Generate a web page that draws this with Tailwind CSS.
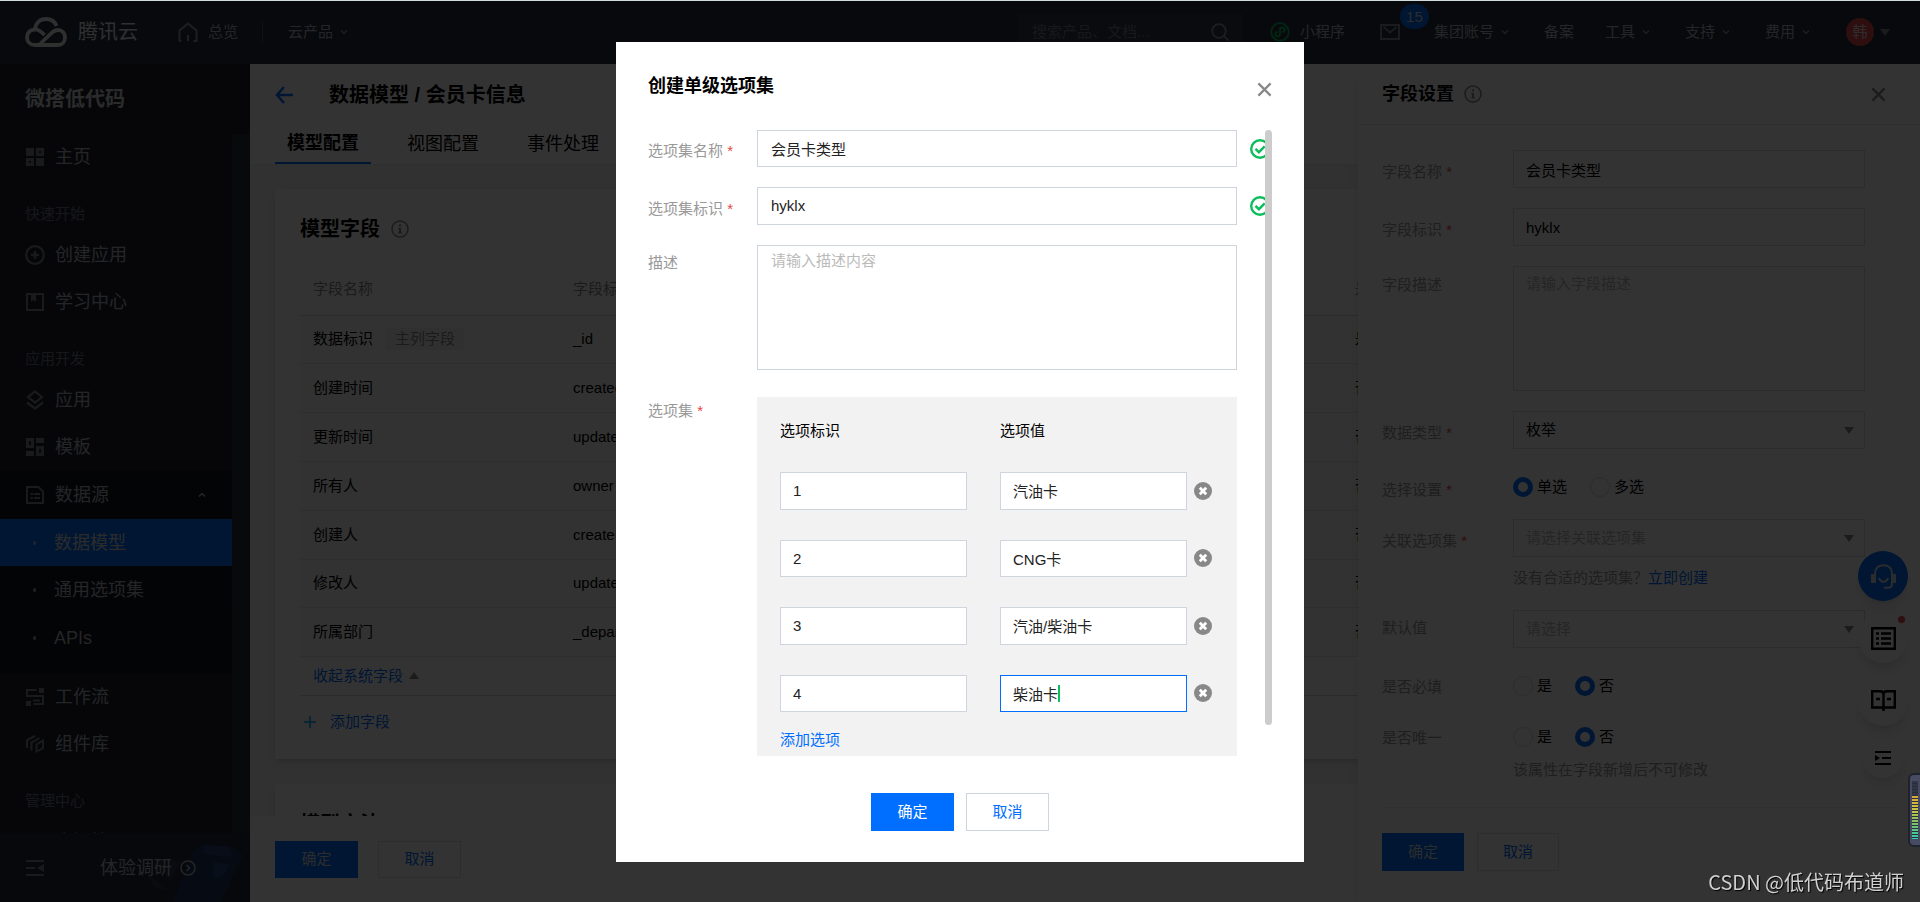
<!DOCTYPE html>
<html lang="zh-CN">
<head>
<meta charset="utf-8">
<meta name="viewport" content="width=device-width, initial-scale=1">
<title>微搭低代码 - 数据模型</title>
<script src="https://cdn.jsdelivr.net/npm/@tailwindcss/browser@4"></script>
</head>
<body class="h-screen overflow-hidden border-t border-[#d3dddd] bg-white font-['Liberation_Sans','Noto_Sans_CJK_SC',sans-serif] text-[15px] leading-[22px] text-black">

<svg class="hidden" aria-hidden="true">
  <symbol id="down" viewBox="0 0 8 8"><path d="M1 2.5l3 3 3-3" fill="none" stroke="currentColor" stroke-width="1.5"/></symbol>
  <symbol id="info" viewBox="0 0 18 18"><circle cx="9" cy="9" r="8" fill="none" stroke="currentColor" stroke-width="1.5"/><path d="M8 4.5h2v2H8zM7 8h3v4.5h1.2v1H6.8v-1H8V9H7z" fill="currentColor"/></symbol>
  <symbol id="close" viewBox="0 0 16 16"><path d="M1.5 1.5l13 13m0-13l-13 13" fill="none" stroke="currentColor" stroke-width="2.4"/></symbol>
  <symbol id="tri" viewBox="0 0 10 7"><path d="M0 0h10L5 7z" fill="currentColor"/></symbol>
  <symbol id="check" viewBox="0 0 20 20"><circle cx="10" cy="10" r="8.8" fill="none" stroke="#0abf5b" stroke-width="2.4"/><path d="M5.5 9.8l3.4 3.4 5.8-5.8" fill="none" stroke="#0abf5b" stroke-width="2.4"/></symbol>
  <symbol id="remove" viewBox="0 0 18 18"><circle cx="9" cy="9" r="9" fill="#888"/><path d="M5.8 5.800l6.400 6.400m0-6.400l-6.400 6.400" stroke="#fff" stroke-width="2.8"/></symbol>
</svg>

<div class="flex h-full flex-col">
  <!-- Top bar -->
  <header class="flex h-[63px] shrink-0 items-center bg-[#262f3e] pb-px pl-[25px] pr-[30px] text-[#b4bac5]">
    <a href="#" class="flex items-center gap-[11px] text-[#e8e8e8]">
      <svg class="h-[30px] w-[42px]" viewBox="0 0 42 30" fill="none" stroke="currentColor" stroke-width="3.8"><path d="M19.5 18C15 13.500 12.500 12.200 9.500 12.500 5 13 2 16 2 20c0 5 3.500 8 8 8h23c4 0 7-3 7-7.500S37 13 33 13c-3.500 0-5 1.500-7 3.500L14 28"/><path d="M10 12.500C10.500 6 15 2 21 2c5 0 9 3 10.500 7"/></svg>
      <span class="text-[20px]">腾讯云</span>
    </a>
    <a href="#" class="ml-10 flex items-center gap-[10px]">
      <svg class="h-5 w-5 text-[#9096a1]" viewBox="0 0 20 20" fill="none" stroke="currentColor" stroke-width="2"><path d="M1.500 19V8.500L10 1.500l8.500 7V19h-3M1.500 19h2M10 19v-6"/></svg>
      <span>总览</span>
    </a>
    <span class="ml-6 h-5 w-px bg-[#4b5463]"></span>
    <a href="#" class="ml-[25px] flex items-center gap-[7px]">云产品<svg class="h-2 w-2 text-[#8c93a0]"><use href="#down"/></svg></a>

    <div class="ml-auto flex h-9 w-[225px] items-center bg-[#2f3b4c] px-[14px]">
      <input type="text" aria-label="搜索" placeholder="搜索产品、文档..." class="w-full min-w-0 bg-transparent placeholder-[#6f7989] outline-none">
      <svg class="h-[18px] w-[18px] shrink-0 text-[#8c93a0]" viewBox="0 0 18 18" fill="none" stroke="currentColor" stroke-width="1.8"><circle cx="8" cy="8" r="6.800"/><path d="M13 13l4.500 4.500"/></svg>
    </div>
    <a href="#" class="ml-[27px] flex items-center gap-[10px]">
      <svg class="h-5 w-5 text-[#07c160]" viewBox="0 0 20 20" fill="none" stroke="currentColor" stroke-width="1.800"><circle cx="10" cy="10" r="8.800"/><path d="M7.800 9.800a2.300 2.300 0 1 0 2.200 2.400V7.700a2.300 2.300 0 1 1 2.400 2.400"/></svg>
      小程序
    </a>
    <a href="#" aria-label="消息" class="relative ml-[35px]">
      <svg class="h-4 w-5 text-[#7f8693]" viewBox="0 0 20 16" fill="none" stroke="currentColor" stroke-width="2"><path d="M1 1h18v14H1zM3.500 3L10 8.500 16.500 3"/></svg>
      <span class="absolute bottom-[11px] left-5 flex h-[25px] w-[29px] items-center justify-center rounded-full bg-[#006eff] text-[#d8dbe0]">15</span>
    </a>
    <a href="#" class="ml-[34px] flex items-center gap-[7px]">集团账号<svg class="h-2 w-2 text-[#8c93a0]"><use href="#down"/></svg></a>
    <a href="#" class="ml-[35px]">备案</a>
    <a href="#" class="ml-[31px] flex items-center gap-[7px]">工具<svg class="h-2 w-2 text-[#8c93a0]"><use href="#down"/></svg></a>
    <a href="#" class="ml-[35px] flex items-center gap-[7px]">支持<svg class="h-2 w-2 text-[#8c93a0]"><use href="#down"/></svg></a>
    <a href="#" class="ml-[35px] flex items-center gap-[7px]">费用<svg class="h-2 w-2 text-[#8c93a0]"><use href="#down"/></svg></a>
    <button type="button" class="ml-9 flex items-center gap-[6px]">
      <span class="flex h-7 w-7 items-center justify-center rounded-full bg-[#e54545] text-[15px] text-[#e0e0e0]">韩</span>
      <svg class="h-[7px] w-[10px] text-[#7f8693]"><use href="#tri"/></svg>
    </button>
  </header>

  <div class="relative flex min-h-0 flex-1">
    <!-- Side menu -->
    <aside class="flex w-[250px] shrink-0 flex-col bg-[#1e222d] text-[18px] text-[#b4b8c0]">
      <h2 class="flex h-[70px] shrink-0 items-center pl-[25px] text-[20px] font-bold text-[#d2d4d8]">微搭低代码</h2>
      <div class="flex min-h-0 flex-1">
        <nav class="min-w-0 flex-1 overflow-hidden">
          <a href="#" class="flex h-[46px] items-center gap-[11px] pl-[26px]">
            <svg class="h-[18px] w-[18px] text-[#7b808b]" viewBox="0 0 18 18" fill="currentColor" fill-rule="evenodd"><path d="M0 0h8v8H0zM10 0h8v8h-8zM13 3v2h2V3zM0 10h8v8H0zM3 13v2h2v-2zM10 10h8v8h-8z"/></svg>主页</a>
          <h3 class="h-[51px] pl-[25px] pt-[23px] text-[15px] text-[#6f7581]">快速开始</h3>
          <a href="#" class="flex h-[47px] items-center gap-[11px] pl-[25px]">
            <svg class="-mr-px h-5 w-5 text-[#7b808b]" viewBox="0 0 20 20" fill="none" stroke="currentColor"><circle cx="10" cy="10" r="8.800" stroke-width="2.200"/><path d="M10 6v8M6 10h8" stroke-width="2.400"/></svg>创建应用</a>
          <a href="#" class="flex h-[47px] items-center gap-[11px] pl-[26px]">
            <svg class="h-[18px] w-[18px] text-[#7b808b]" viewBox="0 0 18 18"><path d="M1 1h16v16H1z" fill="none" stroke="currentColor" stroke-width="2"/><path d="M5 2h5v7L7.500 6.800 5 9z" fill="currentColor"/></svg>学习中心</a>
          <h3 class="h-[51px] pl-[25px] pt-[23px] text-[15px] text-[#6f7581]">应用开发</h3>
          <a href="#" class="flex h-[47px] items-center gap-[11px] pl-[26px]">
            <svg class="h-5 w-[18px] text-[#7b808b]" viewBox="0 0 18 20" fill="none" stroke="currentColor" stroke-width="2.200"><path d="M9 1.500l7 5.500-7 5.500L2 7zM1 12.500l8 6 8-6"/></svg>应用</a>
          <a href="#" class="flex h-12 items-center gap-[11px] pl-[26px]">
            <svg class="h-[18px] w-[18px] text-[#7b808b]" viewBox="0 0 18 18" fill="currentColor" fill-rule="evenodd"><path d="M0 0h8v10H0zM3 3v4h2V3zM10 0h8v5h-8zM0 13h8v5H0zM10 8h8v10h-8zM13 11v4h2v-4z"/></svg>模板</a>
          <div class="bg-[#13161d] pb-3">
            <a href="#" class="flex h-12 items-center gap-[11px] pl-[26px] pr-[26px]">
              <svg class="h-[18px] w-[18px] text-[#7b808b]" viewBox="0 0 18 18" fill="none" stroke="currentColor" stroke-width="2"><path d="M1 1h11.500L17 5.500V17H1z"/><path d="M4.500 8H7m1 0h6M4.500 12H7m1 0h6"/></svg>数据源
              <svg class="ml-auto h-2 w-2 rotate-180"><use href="#down"/></svg></a>
            <a href="#" class="flex h-[47px] items-center gap-[18px] bg-[#006eff] pl-[33px] text-[#d5d8dc]"><span class="h-1 w-[3px] rounded-full bg-white/50"></span>数据模型</a>
            <a href="#" class="flex h-12 items-center gap-[18px] pl-[33px]"><span class="h-1 w-[3px] rounded-full bg-[#9a9da6]"></span>通用选项集</a>
            <a href="#" class="flex h-[47px] items-center gap-[18px] pl-[33px]"><span class="h-1 w-[3px] rounded-full bg-[#9a9da6]"></span>APIs</a>
          </div>
          <a href="#" class="flex h-[47px] items-center gap-[11px] pl-[26px]">
            <svg class="h-[18px] w-[18px] text-[#7b808b]" viewBox="0 0 18 18" fill="none" stroke="currentColor" stroke-width="2"><path d="M10.500 2H1v6h16v8H7.500"/><path d="M13 0h5v5h-5zM0 13h5v5H0z" fill="currentColor" stroke="none"/><path d="M7 12.500h7" /></svg>工作流</a>
          <a href="#" class="flex h-[47px] items-center gap-[11px] pl-[26px]">
            <svg class="h-[18px] w-[18px] text-[#7b808b]" viewBox="0 0 18 18" fill="none" stroke="currentColor" stroke-width="2"><path d="M1 13V5l8-4M5.500 15.500V7.500l8-4.500M10.500 17.500V9.500L17 5.500v7.500l-5 3"/></svg>组件库</a>
          <h3 class="h-[51px] pl-[25px] pt-[23px] text-[15px] text-[#6f7581]">管理中心</h3>
          <a href="#" class="flex h-[47px] items-center pl-[55px]">资源管理</a>
        </nav>
        <div class="w-[18px] shrink-0 bg-[#2c2e36] pl-[6px] pt-1"><div class="h-[472px] w-2 bg-[#262f3e]"></div></div>
      </div>
      <div class="relative flex h-[69px] shrink-0 items-center overflow-hidden bg-[#262b38] pl-[26px]">
        <svg class="absolute right-0 top-0 h-full w-[110px]" viewBox="0 0 110 69"><path d="M33 69L53 19l9-8 28 2 13 9-22 47z" fill="#1d3560"/><path d="M64 12l26 2 3 10-30-3z" fill="#284478"/><path d="M75 28c-8 24 8 20 14 4l-20-4z" fill="#2b4a85"/><path d="M14 26l28 2-12 20zM5 38l22 20-12-4z" fill="#303a50"/></svg>
        <button type="button" aria-label="收起菜单" class="relative text-[#7b808b]"><svg class="h-4 w-[18px]" viewBox="0 0 18 16" fill="currentColor"><path d="M0 0h18v2H0zM0 7h9v2H0zM0 14h18v2H0zM18 4v8l-7-4z"/></svg></button>
        <a href="#" class="relative ml-14 flex items-center gap-2">体验调研<svg class="h-4 w-4" viewBox="0 0 16 16" fill="none" stroke="currentColor" stroke-width="1.500"><circle cx="8" cy="8" r="7"/><path d="M6.500 5l3 3-3 3"/></svg></a>
      </div>
    </aside>

    <!-- Model page -->
    <main class="flex min-w-0 flex-1 flex-col bg-[#f2f2f2]">
      <div class="border-b border-[#e7e9ee] bg-white px-[25px]">
        <div class="flex h-[60px] items-center gap-9 pt-[2px]">
          <button type="button" aria-label="返回" class="text-[#006eff]"><svg class="h-[18px] w-[18px]" viewBox="0 0 18 18" fill="none" stroke="currentColor" stroke-width="2.500"><path d="M9 1L2 9l7 8M2 9h16"/></svg></button>
          <h1 class="text-[20px] font-bold">数据模型 / 会员卡信息</h1>
        </div>
        <div class="flex gap-6 text-[18px]" role="tablist">
          <button type="button" role="tab" class="h-10 border-b-2 border-[#006eff] px-3 font-bold">模型配置</button>
          <button type="button" role="tab" class="h-10 px-3">视图配置</button>
          <button type="button" role="tab" class="h-10 px-3">事件处理</button>
        </div>
      </div>
      <div class="min-h-0 flex-1 overflow-hidden px-[25px] pt-6">
        <section class="bg-white px-[25px] pb-[26px] pt-[27px] shadow-md">
          <h2 class="flex items-center gap-[11px] text-[20px] font-bold leading-[26px]">模型字段<svg class="h-[18px] w-[18px] text-[#888]"><use href="#info"/></svg></h2>
          <table class="mt-[21px] w-full table-fixed border-collapse text-left">
            <colgroup><col class="w-[260px]"><col class="w-[782px]"><col></colgroup>
            <thead class="text-[#888]"><tr class="h-[52px] border-b border-[#cfd5de]"><th class="pl-[13px] font-normal">字段名称</th><th class="pl-[13px] font-normal">字段标识</th><th class="pl-[13px] font-normal">是否必填</th></tr></thead>
            <tbody class="bg-[#f9f9f9]">
              <tr class="h-12 border-b border-[#e5e5e5]"><td class="pl-[13px]">数据标识<span class="ml-[13px] inline-block bg-[#eee] px-[9px] text-[#888]">主列字段</span></td><td class="pl-[13px]">_id</td><td class="pl-[13px]">是</td></tr>
              <tr class="h-[49px] border-b border-[#e5e5e5]"><td class="pl-[13px]">创建时间</td><td class="pl-[13px]">createdAt</td><td class="pl-[13px]">否</td></tr>
              <tr class="h-[49px] border-b border-[#e5e5e5]"><td class="pl-[13px]">更新时间</td><td class="pl-[13px]">updatedAt</td><td class="pl-[13px]">否</td></tr>
              <tr class="h-[49px] border-b border-[#e5e5e5]"><td class="pl-[13px]">所有人</td><td class="pl-[13px]">owner</td><td class="pl-[13px]">否</td></tr>
              <tr class="h-[49px] border-b border-[#e5e5e5]"><td class="pl-[13px]">创建人</td><td class="pl-[13px]">createBy</td><td class="pl-[13px]">否</td></tr>
              <tr class="h-12 border-b border-[#e5e5e5]"><td class="pl-[13px]">修改人</td><td class="pl-[13px]">updateBy</td><td class="pl-[13px]">否</td></tr>
              <tr class="h-[49px] border-b border-[#e5e5e5]"><td class="pl-[13px]">所属部门</td><td class="pl-[13px]">_departmentList</td><td class="pl-[13px]">否</td></tr>
            </tbody>
          </table>
          <div class="flex h-[39px] items-center border-b border-[#cfd5de] pl-[13px]"><button type="button" class="flex items-center gap-[6px] text-[#006eff]">收起系统字段<svg class="h-[7px] w-[10px] rotate-180 text-[#888]"><use href="#tri"/></svg></button></div>
          <button type="button" class="mt-[15px] flex items-center gap-[14px] pl-1 text-[#006eff]"><svg class="h-3 w-3 text-[#00a4ff]" viewBox="0 0 12 12" stroke="currentColor" stroke-width="1.500"><path d="M6 0v12M0 6h12"/></svg>添加字段</button>
        </section>
        <section class="mt-[25px] bg-white px-[25px] pb-9 pt-[27px] shadow-md"><h2 class="text-[20px] font-bold leading-[26px]">模型方法</h2></section>
      </div>
      <div class="flex h-[86px] shrink-0 items-center gap-5 bg-white px-[25px]">
        <button type="button" class="h-[37px] w-[83px] bg-[#006eff] text-[#d5dae2]">确定</button>
        <button type="button" class="h-[37px] w-[83px] border border-[#dcdfe6] text-[#006eff]">取消</button>
      </div>
    </main>

    <!-- Field settings drawer -->
    <aside class="absolute inset-y-0 right-0 w-[562px] bg-white shadow-lg">
      <div class="flex h-[61px] items-center border-b border-[#e7e9ee] pl-6 pr-[34px]">
        <h2 class="text-[18px] font-bold">字段设置</h2>
        <svg class="ml-[10px] h-[18px] w-[18px] text-[#888]"><use href="#info"/></svg>
        <button type="button" aria-label="关闭" class="ml-auto text-[#888]"><svg class="h-[15px] w-[15px]"><use href="#close"/></svg></button>
      </div>
      <form class="px-6 pt-[25px]">
        <div class="grid grid-cols-[131px_352px] text-[#999]">
          <label for="f1" class="pt-[11px]">字段名称 <span class="text-[#e54545]">*</span></label>
          <input id="f1" type="text" value="会员卡类型" class="mb-5 h-[38px] border border-[#d5d9e0] px-3 text-black outline-none">
          <label for="f2" class="pt-[11px]">字段标识 <span class="text-[#e54545]">*</span></label>
          <input id="f2" type="text" value="hyklx" class="mb-5 h-[38px] border border-[#d5d9e0] px-3 text-black outline-none">
          <label for="f3" class="pt-2">字段描述</label>
          <textarea id="f3" placeholder="请输入字段描述" class="mb-5 h-[125px] resize-none border border-[#d5d9e0] px-3 py-[6px] placeholder-[#bbb] outline-none"></textarea>
          <label for="f4" class="pt-[11px]">数据类型 <span class="text-[#e54545]">*</span></label>
          <div class="relative mb-7 h-[38px] text-[#888]"><select id="f4" class="h-full w-full appearance-none border border-[#d5d9e0] px-3 text-black outline-none"><option>枚举</option></select><svg class="pointer-events-none absolute right-[11px] top-4 h-[7px] w-[10px]"><use href="#tri"/></svg></div>
          <span class="pt-[2px]">选择设置 <span class="text-[#e54545]">*</span></span>
          <div class="mb-[22px] flex h-5 items-center text-black">
            <label class="flex items-center gap-1"><input type="radio" name="mode" checked class="h-5 w-5 appearance-none rounded-full border border-[#d5d9e0] checked:border-[5px] checked:border-[#006eff]">单选</label>
            <label class="ml-[23px] flex items-center gap-1"><input type="radio" name="mode" class="h-5 w-5 appearance-none rounded-full border border-[#d5d9e0] checked:border-[5px] checked:border-[#006eff]">多选</label>
          </div>
          <label for="f5" class="pt-[11px]">关联选项集 <span class="text-[#e54545]">*</span></label>
          <div class="mb-[21px]">
            <div class="relative h-[38px] text-[#888]"><select id="f5" class="h-full w-full appearance-none border border-[#d5d9e0] px-3 text-[#bbb] outline-none"><option>请选择关联选项集</option></select><svg class="pointer-events-none absolute right-[11px] top-4 h-[7px] w-[10px]"><use href="#tri"/></svg></div>
            <p class="mt-[10px]">没有合适的选项集？<a href="#" class="text-[#006eff]">立即创建</a></p>
          </div>
          <label for="f6" class="pt-[7px]">默认值</label>
          <div class="relative mb-7 h-[38px] text-[#888]"><select id="f6" class="h-full w-full appearance-none border border-[#d5d9e0] px-3 text-[#bbb] outline-none"><option>请选择</option></select><svg class="pointer-events-none absolute right-[11px] top-4 h-[7px] w-[10px]"><use href="#tri"/></svg></div>
          <span>是否必填</span>
          <div class="mb-[31px] flex h-5 items-center text-black">
            <label class="flex items-center gap-1"><input type="radio" name="req" class="h-5 w-5 appearance-none rounded-full border border-[#d5d9e0] checked:border-[5px] checked:border-[#006eff]">是</label>
            <label class="ml-[23px] flex items-center gap-1"><input type="radio" name="req" checked class="h-5 w-5 appearance-none rounded-full border border-[#d5d9e0] checked:border-[5px] checked:border-[#006eff]">否</label>
          </div>
          <span>是否唯一</span>
          <div>
            <div class="flex h-5 items-center text-black">
              <label class="flex items-center gap-1"><input type="radio" name="uniq" class="h-5 w-5 appearance-none rounded-full border border-[#d5d9e0] checked:border-[5px] checked:border-[#006eff]">是</label>
              <label class="ml-[23px] flex items-center gap-1"><input type="radio" name="uniq" checked class="h-5 w-5 appearance-none rounded-full border border-[#d5d9e0] checked:border-[5px] checked:border-[#006eff]">否</label>
            </div>
            <p class="mt-3">该属性在字段新增后不可修改</p>
          </div>
        </div>
        <div class="mt-[26px] flex gap-[13px] border-t border-[#e7e9ee] pt-[25px]">
          <button type="button" class="h-[38px] w-[82px] bg-[#006eff] text-[#d5dae2]">确定</button>
          <button type="button" class="h-[38px] w-[82px] border border-[#dcdfe6] text-[#006eff]">取消</button>
        </div>
      </form>
    </aside>

    <!-- Floating helpers -->
    <div class="absolute right-3 top-[487px] flex flex-col items-center gap-3">
      <button type="button" aria-label="在线客服" class="flex h-[50px] w-[50px] items-center justify-center rounded-full bg-[#006eff] text-[#d5dae2] shadow-lg"><svg class="h-[25px] w-[25px]" viewBox="0 0 25 25" fill="none" stroke="currentColor" stroke-width="2"><path d="M4 10C4 4 8 1.200 12.500 1.200S21 4 21 10v9.500c0 3-2 4.300-4 4.300h-4"/><path d="M0 10h5v9H0zM20 10h5v9h-5z" fill="currentColor" stroke="none"/><path d="M8 14c1.500 5 7.500 5 9 0"/></svg></button>
      <button type="button" aria-label="任务列表" class="relative flex h-[50px] w-[50px] items-center justify-center rounded-full bg-white shadow-lg"><svg class="h-[23px] w-[25px]" viewBox="0 0 25 23" fill="none" stroke="currentColor" stroke-width="2.400"><path d="M1.200 1.200h22.600v20.600H1.200z"/><path d="M5 6.500h3M10 6.500h10M5 11.500h3M10 11.500h10M5 16.500h3M10 16.500h10"/></svg><span class="absolute right-[3px] top-[3px] h-[7px] w-[7px] rounded-full bg-[#e54545]"></span></button>
      <button type="button" aria-label="文档" class="mt-px flex h-[50px] w-[50px] items-center justify-center rounded-full bg-white shadow-lg"><svg class="h-[22px] w-[25px]" viewBox="0 0 25 22" fill="none" stroke="currentColor" stroke-width="2.400"><path d="M12.500 21v-3.500H1.200V1.200H9c2 0 3.500 1 3.500 3 0-2 1.500-3 3.500-3h7.800v16.300H12.500V4M5 9h4M16 9h4"/></svg></button>
      <button type="button" aria-label="收起" class="flex h-10 w-10 items-center justify-center rounded-full bg-white shadow-lg"><svg class="h-[14px] w-4" viewBox="0 0 16 14" fill="currentColor"><path d="M0 0h16v2H0zM7 6h9v2H7zM0 12h16v2H0zM0 4l5 3-5 3z"/></svg></button>
    </div>
  </div>
</div>

<!-- Dialog -->
<div class="fixed inset-x-0 bottom-0 top-px flex items-center justify-center bg-black/80">
  <div role="dialog" aria-labelledby="dlg" class="flex h-[820px] max-h-full w-[688px] flex-col bg-white px-8">
    <div class="flex items-start pt-[33px]">
      <h2 id="dlg" class="text-[18px] font-bold">创建单级选项集</h2>
      <button type="button" aria-label="关闭" class="ml-auto mt-[7px] text-[#888]"><svg class="h-[15px] w-[15px]"><use href="#close"/></svg></button>
    </div>
    <div class="relative mt-[33px] min-h-0 flex-1 overflow-hidden">
      <form class="grid grid-cols-[109px_480px_auto] text-[#999]">
        <label for="d1" class="pt-[10px]">选项集名称 <span class="text-[#e54545]">*</span></label>
        <input id="d1" type="text" value="会员卡类型" class="mb-5 h-[37px] border border-[#cfd5de] px-[13px] text-[#222] outline-none">
        <svg class="ml-[13px] mt-[9px] h-5 w-5"><use href="#check"/></svg>
        <label for="d2" class="pt-[11px]">选项集标识 <span class="text-[#e54545]">*</span></label>
        <input id="d2" type="text" value="hyklx" class="mb-5 h-[38px] border border-[#cfd5de] px-[13px] text-[#222] outline-none">
        <svg class="ml-[13px] mt-[9px] h-5 w-5"><use href="#check"/></svg>
        <label for="d3" class="pt-[7px]">描述</label>
        <textarea id="d3" placeholder="请输入描述内容" class="mb-[27px] h-[125px] resize-none border border-[#cfd5de] px-[13px] py-1 placeholder-[#bbb] outline-none"></textarea>
        <span></span>
        <span class="pt-[3px]">选项集 <span class="text-[#e54545]">*</span></span>
        <div class="bg-[#f2f2f2] px-[23px] pb-8 pt-[23px]">
          <div class="grid grid-cols-[187px_187px_18px] items-center text-black">
            <span>选项标识</span><span class="ml-[33px] whitespace-nowrap">选项值</span><span></span>
          </div>
          <div class="mt-[30px] flex flex-col gap-[30px] text-[#222]">
            <div class="flex items-center"><input type="text" aria-label="选项标识" value="1" class="h-[38px] w-[187px] border border-[#cfd5de] bg-white px-3 outline-none"><input type="text" aria-label="选项值" value="汽油卡" class="ml-[33px] h-[38px] w-[187px] border border-[#cfd5de] bg-white px-3 outline-none"><button type="button" aria-label="删除" class="ml-[7px]"><svg class="h-[18px] w-[18px]"><use href="#remove"/></svg></button></div>
            <div class="flex items-center"><input type="text" aria-label="选项标识" value="2" class="h-[37px] w-[187px] border border-[#cfd5de] bg-white px-3 outline-none"><input type="text" aria-label="选项值" value="CNG卡" class="ml-[33px] h-[37px] w-[187px] border border-[#cfd5de] bg-white px-3 outline-none"><button type="button" aria-label="删除" class="ml-[7px]"><svg class="h-[18px] w-[18px]"><use href="#remove"/></svg></button></div>
            <div class="flex items-center"><input type="text" aria-label="选项标识" value="3" class="h-[38px] w-[187px] border border-[#cfd5de] bg-white px-3 outline-none"><input type="text" aria-label="选项值" value="汽油/柴油卡" class="ml-[33px] h-[38px] w-[187px] border border-[#cfd5de] bg-white px-3 outline-none"><button type="button" aria-label="删除" class="ml-[7px]"><svg class="h-[18px] w-[18px]"><use href="#remove"/></svg></button></div>
            <div class="flex items-center"><input type="text" aria-label="选项标识" value="4" class="h-[37px] w-[187px] border border-[#cfd5de] bg-white px-3 outline-none"><div class="relative ml-[33px]"><input type="text" aria-label="选项值" value="柴油卡" class="block h-[37px] w-[187px] border border-[#006eff] bg-white px-3 outline-none"><span class="absolute left-[58px] top-[10px] h-[17px] w-[2px] bg-[#0abf5b]"></span></div><button type="button" aria-label="删除" class="ml-[7px]"><svg class="h-[18px] w-[18px]"><use href="#remove"/></svg></button></div>
          </div>
          <button type="button" class="mt-[17px] text-[#006eff]">添加选项</button>
        </div>
      </form>
      <div class="absolute right-0 top-0 h-[595px] w-[7px] rounded-full bg-[#ccc]"></div>
    </div>
    <div class="flex justify-center gap-3 pb-[31px] pt-[37px]">
      <button type="button" class="h-[38px] w-[83px] bg-[#006eff] text-white">确定</button>
      <button type="button" class="h-[38px] w-[83px] border border-[#cfd5de] text-[#006eff]">取消</button>
    </div>
  </div>
</div>

<!-- Volume meter at the window edge -->
<div class="fixed bottom-[55px] right-0 flex h-[74px] w-3 flex-col items-center rounded-l-md border-2 border-r-0 border-[#20222e] bg-[#474b61] pt-[6px]">
  <div class="h-[58px] w-[6px] bg-[repeating-linear-gradient(to_bottom,transparent_0_2px,#2a2d3c_2px_3px),linear-gradient(to_bottom,#333647_0_14px,#dda63a_15px,#c9c545_28px,#7fc06a_42px,#35c9a5_57px)]"></div>
</div>
<p class="fixed bottom-[9px] right-4 font-['Noto_Sans_CJK_SC',sans-serif] text-[20px] text-[#d0d0d0] [text-shadow:1px_1px_1px_#000]">CSDN @低代码布道师</p>
</body>
</html>
